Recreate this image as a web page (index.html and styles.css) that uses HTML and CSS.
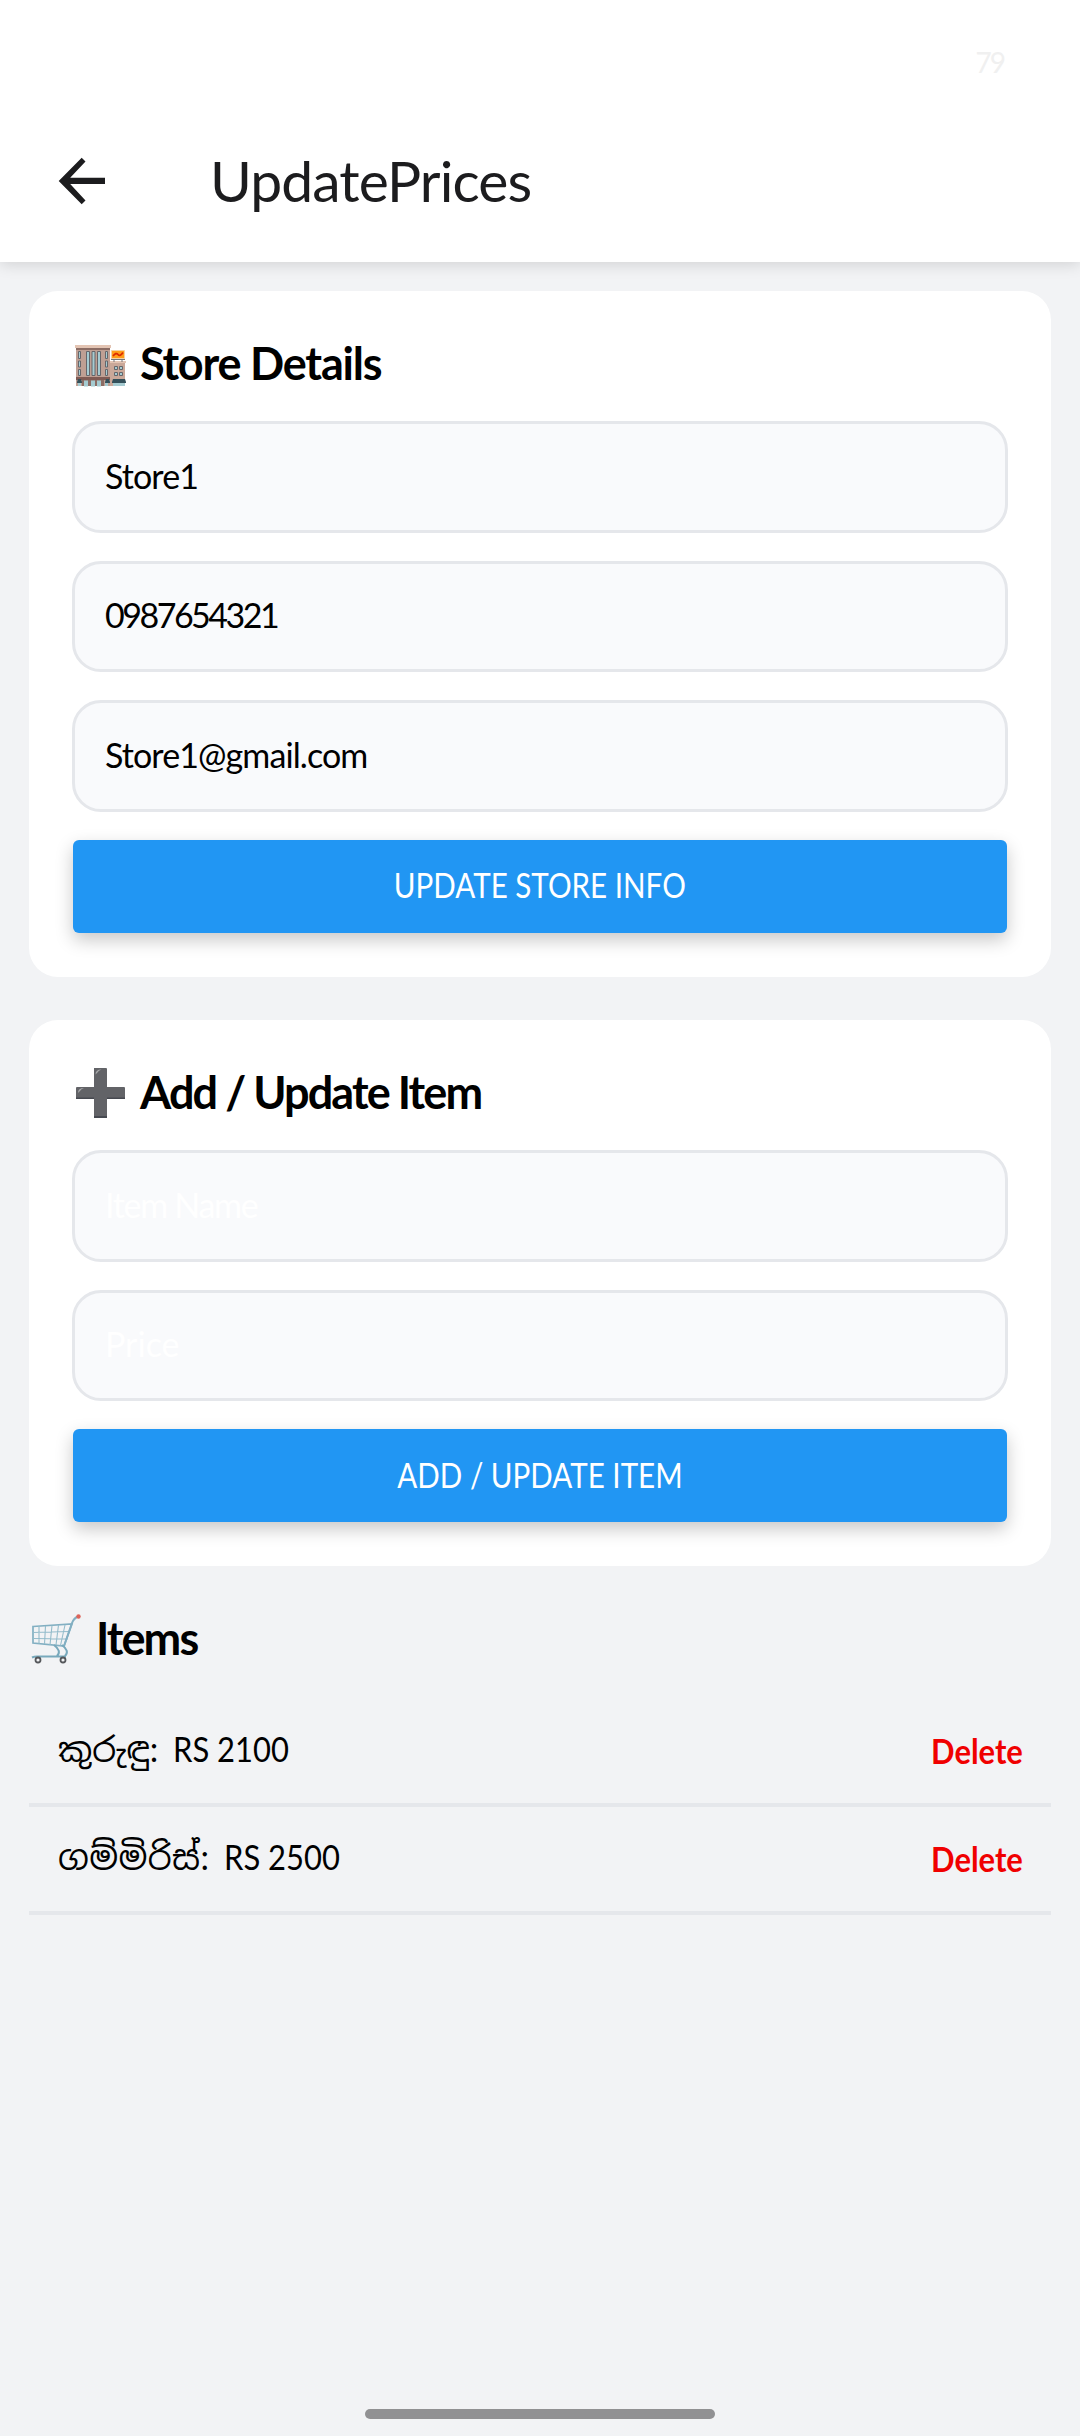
FILE: index.html
```html
<!DOCTYPE html>
<html lang="en">
<head>
<meta charset="utf-8">
<title>UpdatePrices</title>
<link rel="stylesheet" href="styles.css">
</head>
<body>
<div class="screen">
  <header class="header">
    <div class="status"><span class="battery">79</span></div>
    <div class="appbar">
      <svg class="back" viewBox="0 0 48 48"><path d="M47 20.700H12.200L27.500 4.500 23.700.8 0.700 24l23 23.200 3.800-3.800L12.200 27H47z" fill="#1c1c1e"/></svg>
      <h1 class="title">UpdatePrices</h1>
    </div>
  </header>
  <main class="content">
    <section class="card">
      <h2 class="heading">
        <svg class="emoji" viewBox="0 0 50 50">
          <path d="M1 10h34v37H1z" fill="#bf9f93"/><path d="M0 6h36v3H0z" fill="#e3c4b3"/><path d="M1 9h34v2H1z" fill="#8b6c64"/>
          <path d="M35 23h15v24H35z" fill="#caa899"/><path d="M35 22h16v2H35z" fill="#e3c4b3"/>
          <path d="M1 38h34v3H1z" fill="#805b54"/><path d="M7 41h22v6H7z" fill="#8b6c64"/>
          <g fill="#a5cbd1" stroke="#65666b" stroke-width="1"><path d="M11.500 12.500h3v24h-3zM17 12.500h3v24h-3zM22.500 12.500h3v24h-3zM3.500 12.500h2v7h-2zM3.500 22h2v6h-2zM3.500 30.500h2v6h-2zM30.500 12.500h2v7h-2zM30.500 22h2v6h-2zM30.500 30.500h2v6h-2zM39.500 27.500h3v3h-3zM44.500 27.500h3v3h-3zM39.500 33.500h3v3h-3zM44.500 33.500h3v3h-3z"/></g>
          <path d="M9 43.500h4v6h-4zM16 43.500h4v6h-4zM22 43.500h4v6h-4z" transform="translate(0 -2)" fill="#a5cbd1"/>
          <path d="M3 42h3v5H3zM30 42h3v5h-3zM38 42h12v5H38z" fill="#a5cbd1"/>
          <path d="M2 43l1-3h3l1 3v1H2zM30 43l1-3h3l1 3v1h-5zM37 43l1-3h12l1 3v1H37z" fill="#34505a"/>
          <path d="M36.500 11.500h13v8h-13z" fill="#ff9d19" stroke="#f6d2a2"/><path d="M38 17q3-4 5-1.500t5-2" fill="none" stroke="#dd2c00" stroke-width="1.700"/><path d="M36 20.500h14M39 20v3M47 20v3" stroke="#77777b" fill="none"/>
        </svg>
        <span class="t-store">Store Details</span>
      </h2>
      <input class="field f-name" value="Store1">
      <input class="field f-phone" value="0987654321">
      <input class="field f-mail" value="Store1@gmail.com">
      <button class="button"><span class="label">UPDATE STORE INFO</span></button>
    </section>
    <section class="card">
      <h2 class="heading">
        <svg class="emoji" viewBox="0 0 50 50"><path d="M19 0h12q1 0 1 1v18h17q1 0 1 1v10q0 1-1 1H32v18q0 1-1 1H20q-1 0-1-1V31H2q-1 0-1-1V20q0-1 1-1h17z" fill="#626367"/><path d="M1 29.500h18v1.500H1zM32 29.500h18v1.500H32zM19 48h13v2H19z" fill="#464950"/><path d="M20.500 6.500q0-5 6-5-3 1-4 3zM3 25q0-5 6-5-3 1-4 3z" fill="#a8a9ab"/></svg>
        <span class="t-add">Add / Update Item</span>
      </h2>
      <input class="field f-item" placeholder="Item Name">
      <input class="field f-price" placeholder="Price">
      <button class="button"><span class="label">ADD / UPDATE ITEM</span></button>
    </section>
    <section class="items">
      <h2 class="heading">
        <svg class="emoji" viewBox="0 0 50 50" fill="none">
          <path d="M2 12.500L41 10 33 32 2 29z" stroke="#82afc2" stroke-width="1.700"/>
          <path d="M2 18.500l36.500-1M2 24.500l34.500.5M8 12v17.500M14.500 12L13.500 30M21 11.500L19 31M27.500 11L25 31M34 11L29.500 31.500" stroke="#94bccb" stroke-width="1.100"/>
          <path d="M33 32L41 9q2-5 6-6.500" stroke="#82afc2" stroke-width="2"/><circle cx="47.500" cy="2.500" r="2.200" fill="#dd6359"/>
          <path d="M23 31q8 6 3 11M31 31q8 6 3 11M1 43.500q2-1 5-1h29" stroke="#78a9bc" stroke-width="2"/>
          <circle cx="7" cy="46" r="2.500" stroke="#55575b" stroke-width="1.800"/><circle cx="32" cy="46" r="2.500" stroke="#55575b" stroke-width="1.800"/>
        </svg>
        <span class="t-items">Items</span>
      </h2>
      <div class="row"><span class="item"><span class="si">කුරුඳු:</span><span class="price">RS 2100</span></span><span class="delete">Delete</span></div>
      <div class="row"><span class="item"><span class="si si-wide">ගම්මිරිස්:</span><span class="price">RS 2500</span></span><span class="delete">Delete</span></div>
    </section>
  </main>
  <footer class="gesture"><span class="pill"></span></footer>
</div>
</body>
</html>
```
FILE: styles.css
```css
* { box-sizing: border-box; }
body { margin: 0; background: #f2f3f5; color: #000; font-family: Lato, "Noto Sans Sinhala", "Noto Sans", sans-serif; }
.screen { width: 1080px; height: 2436px; display: flex; flex-direction: column; overflow: hidden; }
.header { height: 262px; flex: none; background: #fff; box-shadow: 0 3px 14px rgba(0,0,0,.13); }
.status { height: 98px; display: flex; justify-content: flex-end; padding: 44px 76px 0 0; }
.battery { font-size: 28px; line-height: 36px; color: #f0f0f0; letter-spacing: -2px; }
.appbar { height: 164px; display: flex; align-items: center; padding: 0 58px; }
.back { width: 48px; height: 48px; margin-top: 1px; }
.title { margin: 0 0 0 104px; font-size: 57px; line-height: 70px; font-weight: 400; color: #1c1c1e; letter-spacing: -.9px; }
.content { flex: 1; padding: 29px 29px 0; }
.card { height: 686px; background: #fff; border-radius: 29px; padding: 43px 44px 0; margin-bottom: 43px; }
.card + .card { height: 546px; }
.heading { margin: 0; height: 60px; display: flex; align-items: center; gap: 15px; font-size: 45px; line-height: 60px; font-weight: 700; white-space: nowrap; }
.heading span { padding-bottom: 2px; }
.emoji { width: 50px; height: 50px; flex: none; margin-left: 2px; overflow: visible; }
.card .heading { margin-bottom: 27px; }
.t-store { letter-spacing: -1.2px; }
.t-add, .t-items { letter-spacing: -1.9px; }
.field { display: block; width: 936px; height: 111.6px; margin: 0 -1px 28px; padding: 0 30px 3px; border: 3px solid #e5e7eb; border-radius: 29px; background: #f9fafc; color: #000; font: 400 34px/50px Lato, sans-serif; }
.field::placeholder { color: #fff; opacity: 1; }
.f-name, .f-mail { letter-spacing: -.9px; }
.f-phone { letter-spacing: -2.5px; }
.f-item { letter-spacing: -1.3px; }
.button { display: block; width: 934px; height: 93px; padding: 0 0 2px; border: 0; border-radius: 6px; background: #2196f3; color: #fff; font: 400 34px/50px Lato, sans-serif; box-shadow: 0 7px 18px rgba(0,0,0,.22); }
.label { display: inline-block; transform: scaleX(.87); }
.items .heading { margin-bottom: 30px; }
.row { height: 108px; display: flex; justify-content: space-between; align-items: center; padding: 0 28px 2px 29px; border-bottom: 4px solid #e5e7eb; font-size: 34px; }
.item { display: flex; gap: 15px; align-items: baseline; }
.si-wide { letter-spacing: .4px; }
.price { display: inline-block; transform: scaleX(.91); transform-origin: left; }
.delete { color: #f00000; font-weight: 700; transform: scaleX(.91); transform-origin: right; }
.gesture { height: 28px; flex: none; display: flex; justify-content: center; }
.pill { width: 350px; height: 10px; margin-top: 1px; border-radius: 5px; background: #919193; }
```
